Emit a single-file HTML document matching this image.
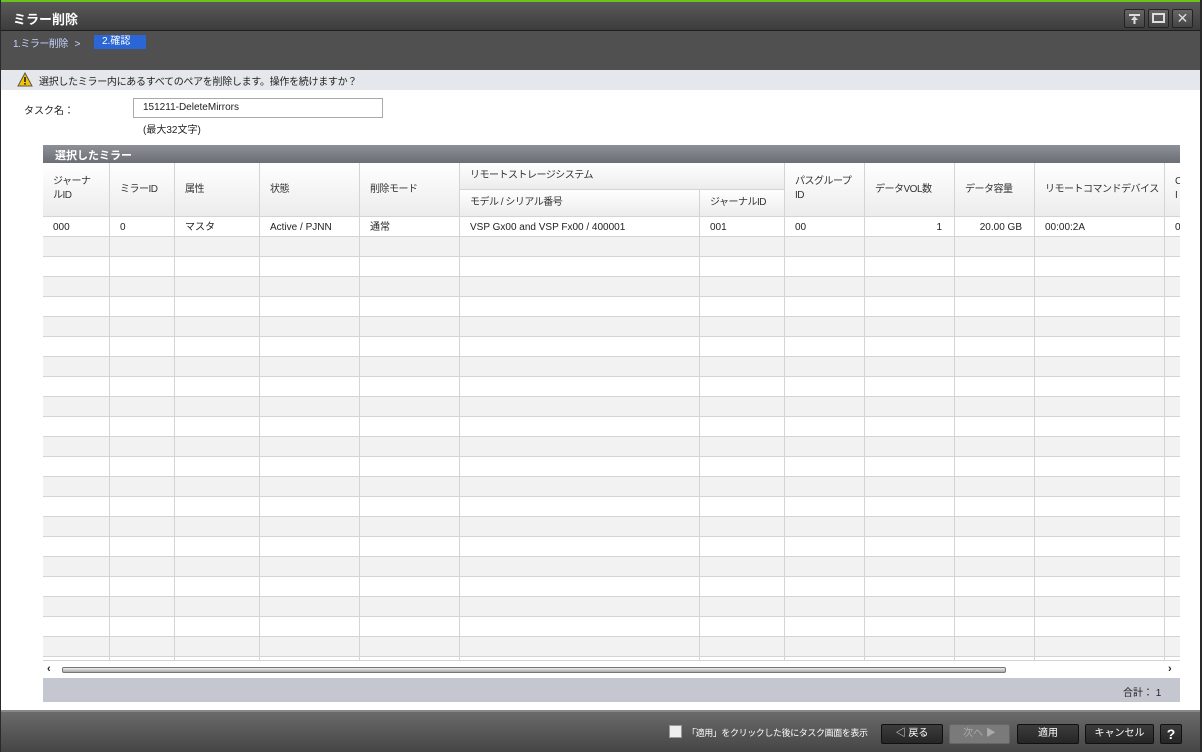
<!DOCTYPE html>
<html><head><meta charset="utf-8"><style>
*{margin:0;padding:0;box-sizing:border-box}
body{width:1202px;height:752px;overflow:hidden;background:#2a2a2a;font-family:"Liberation Sans","Noto Sans CJK JP",sans-serif;font-size:11px;color:#222;position:relative}
.abs{position:absolute}
#title{left:1px;top:0;width:1199px;height:31px;background:linear-gradient(#5a5a5a,#3c3c3c);border-top:2px solid #6ac21a;border-bottom:1px solid #1e1e1e}
#title span{position:absolute;left:12px;top:7px;color:#fff;font-size:13px;font-weight:bold}
.wb{position:absolute;top:7px;width:21px;height:19px;border:1px solid #222;border-radius:2px;background:linear-gradient(#666,#444);color:#ddd;text-align:center;font-size:14px;line-height:17px}
#crumb{left:1px;top:31px;width:1199px;height:39px;background:#505050}
#warn{left:1px;top:70px;width:1199px;height:20px;background:#e6e7ec}
#main{left:1px;top:90px;width:1199px;height:620px;background:#fff}
#bottom{left:1px;top:710px;width:1199px;height:42px;background:linear-gradient(#6a6a6a,#454545);border-top:2px solid #888}
.btn{position:absolute;top:12px;height:20px;border:1px solid #111;border-radius:2px;background:linear-gradient(#3c3c3c,#262626);color:#fff;text-align:center;line-height:18px;font-size:10px}
.cell{position:absolute;border-right:1px solid #d4d4d4;border-bottom:1px solid #d4d4d4;white-space:nowrap}
.hd{background:linear-gradient(#fff,#ececec);font-size:10px;color:#333;padding:6px 0 0 10px;line-height:14px;letter-spacing:-0.5px}
</style></head><body>
<div id="title" class="abs"><span>ミラー削除</span>
<div class="wb" style="left:1123px"><svg width="19" height="17"><rect x="4" y="4" width="11" height="2" fill="#ddd"/><path d="M9.5 6L6 10H8.5V14H10.5V10H13Z" fill="#ddd"/></svg></div><div class="wb" style="left:1147px"><div style="width:13px;height:10px;border:2px solid #ddd;margin:3px auto 0"></div></div><div class="wb" style="left:1171px">✕</div></div>
<div id="crumb" class="abs"><span class="abs" style="left:12px;top:4px;color:#c8d4ff;font-size:10px;letter-spacing:-0.5px">1.ミラー削除 &nbsp;&nbsp;&gt;</span><span class="abs" style="left:93px;top:4px;width:52px;height:14px;background:#2a66d6;color:#fff;font-size:10px;padding-left:8px;line-height:14px">2.確認</span></div>
<div id="warn" class="abs"><svg class="abs" style="left:16px;top:2px" width="16" height="15"><path d="M8 1L15 14H1Z" fill="#f3c400" stroke="#555" stroke-width="1"/><rect x="7.2" y="5" width="1.6" height="5" fill="#222"/><rect x="7.2" y="11" width="1.6" height="1.6" fill="#222"/></svg><span class="abs" style="left:38px;top:3px;font-size:10px;letter-spacing:-0.3px">選択したミラー内にあるすべてのペアを削除します。操作を続けますか？</span></div>
<div id="main" class="abs">
<span class="abs" style="left:23px;top:12px;font-size:10px">タスク名：</span>
<div class="abs" style="left:132px;top:8px;width:250px;height:20px;border:1px solid #aaa;padding:3px 9px;font-size:10px">151211-DeleteMirrors</div>
<span class="abs" style="left:142px;top:31px;font-size:10px">(最大32文字)</span>
<div class="abs" style="left:42px;top:55px;width:1137px;height:18px;background:linear-gradient(#8e9098,#6c6e76);color:#fff;font-weight:bold;font-size:11px;padding:2px 0 0 12px">選択したミラー</div>
<div class="abs" id="tbl" style="left:42px;top:73px;width:1137px;height:497px;overflow:hidden;background:#fff"></div>
<div class="abs" style="left:42px;top:570px;width:1137px;height:18px;background:#fff;border-top:1px solid #d4d4d4"><span class="abs" style="left:4px;top:2px;font-weight:bold">‹</span><div class="abs" style="left:19px;top:6px;width:944px;height:6px;border:1px solid #777;border-radius:2px;background:linear-gradient(#eee,#aaa)"></div><span class="abs" style="left:1125px;top:2px;font-weight:bold">›</span></div>
<div class="abs" style="left:42px;top:588px;width:1137px;height:24px;background:#c4c7d0"><span class="abs" style="left:1080px;top:6px;font-size:10px">合計： 1</span></div>
</div>
<div id="bottom" class="abs">
<div class="abs" style="left:668px;top:13px;width:13px;height:13px;background:#eee;border:1px solid #999"></div>
<span class="abs" style="left:686px;top:14px;color:#fff;font-size:9px;letter-spacing:-0.4px;white-space:nowrap">「適用」をクリックした後にタスク画面を表示</span>
<div class="btn" style="left:880px;width:62px">◁ 戻る</div>
<div class="btn" style="left:948px;width:61px;background:#7a7a7a;color:#aaa;border-color:#666">次へ ▶</div>
<div class="btn" style="left:1016px;width:62px">適用</div>
<div class="btn" style="left:1084px;width:69px">キャンセル</div>
<div class="btn" style="left:1159px;width:22px;font-weight:bold;font-size:14px">?</div>
</div>
<script>
var xs=[0,67,132,217,317,417,657,742,822,912,992,1122,1160];
var t=document.getElementById('tbl'),h='';
var hd=['ジャーナ<br>ルID','ミラーID','属性','状態','削除モード',null,null,'パスグループ<br>ID','データVOL数','データ容量','リモートコマンドデバイス','C<br>I'];
for(var i=0;i<12;i++){if(hd[i]==null)continue;h+='<div class="cell hd" style="left:'+xs[i]+'px;top:0;width:'+(xs[i+1]-xs[i])+'px;height:54px;padding-top:'+(hd[i].indexOf('br')>0?12:20)+'px">'+hd[i]+'</div>';}
h+='<div class="cell hd" style="left:417px;top:0;width:325px;height:27px">リモートストレージシステム</div>';
h+='<div class="cell hd" style="left:417px;top:27px;width:240px;height:27px">モデル / シリアル番号</div>';
h+='<div class="cell hd" style="left:657px;top:27px;width:85px;height:27px">ジャーナルID</div>';
var d=['000','0','マスタ','Active / PJNN','通常','VSP Gx00 and VSP Fx00 / 400001','001','00','1','20.00 GB','00:00:2A','0'];
for(var r=0;r<23;r++){var bg=r%2?'#f2f2f2':'#fff';for(var i=0;i<12;i++){var tx=r==0?d[i]:'';var al=(i==8||i==9)?'text-align:right;padding-right:12px;':'padding-left:10px;';h+='<div class="cell" style="left:'+xs[i]+'px;top:'+(54+r*20)+'px;width:'+(xs[i+1]-xs[i])+'px;height:20px;background:'+bg+';font-size:10px;line-height:21px;'+al+'">'+tx+'</div>';}}
t.innerHTML=h;
</script>
</body></html>
